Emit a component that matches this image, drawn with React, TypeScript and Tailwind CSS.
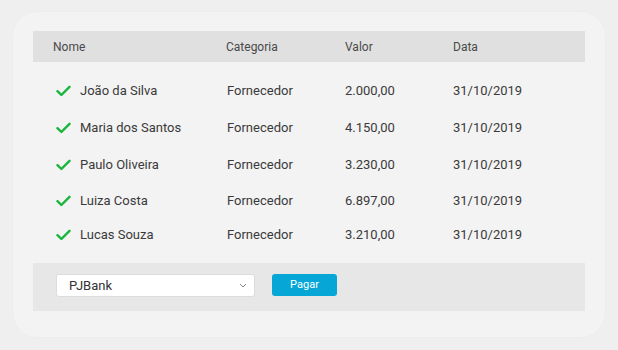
const rows = [
  { name: "João da Silva", valor: "2.000,00", data: "31/10/2019", h: "h-[36px]" },
  { name: "Maria dos Santos", valor: "4.150,00", data: "31/10/2019", h: "h-[37px]" },
  { name: "Paulo Oliveira", valor: "3.230,00", data: "31/10/2019", h: "h-[37px]" },
  { name: "Luiza Costa", valor: "6.897,00", data: "31/10/2019", h: "h-[35px]" },
  { name: "Lucas Souza", valor: "3.210,00", data: "31/10/2019", h: "h-[33px]" },
];

function Check() {
  return (
    <svg width="15" height="12" viewBox="0 0 15 12" className="shrink-0">
      <path d="M1.5 6.2 L5.4 10 L13.5 1.8" fill="none" stroke="#1ab53c" strokeWidth="2.4" strokeLinecap="round" strokeLinejoin="round" />
    </svg>
  );
}

export default function App() {
  return (
    <div className="w-[618px] h-[350px] bg-[#efefef] pt-[12px] pl-[13px]" style={{ fontFamily: "Roboto, 'Liberation Sans', sans-serif" }}>
      <div className="w-[592px] h-[325px] bg-[#f3f3f3] rounded-[24px] pt-[19px] px-[20px] shadow-[0_0_2px_rgba(0,0,0,0.04)]">
        {/* header */}
        <div className="h-[31px] bg-[#e0e0e0] flex items-center text-[12px] text-[#4a4a4a]">
          <div className="w-[193px] pl-[20px]">Nome</div>
          <div className="w-[119px]">Categoria</div>
          <div className="w-[108px]">Valor</div>
          <div>Data</div>
        </div>

        <div className="pt-[11px]">
          {rows.map((r) => (
            <div key={r.name} className={`${r.h} flex items-center text-[13px] text-[#3a3a3a]`}>
              <div className="w-[193px] pl-[23px] flex items-center gap-[9px]">
                <Check />
                <span>{r.name}</span>
              </div>
              <div className="w-[119px] pl-[1px]">Fornecedor</div>
              <div className="w-[108px]">{r.valor}</div>
              <div>{r.data}</div>
            </div>
          ))}
        </div>

        {/* footer */}
        <div className="mt-[12px] h-[48px] bg-[#e7e7e7] flex items-start pt-[11px] pl-[23px] gap-[17px]">
          <div className="w-[199px] h-[23px] bg-white border border-[#dcdcdc] rounded-[3px] flex items-center justify-between pl-[12px] pr-[7px] text-[13px] text-[#333]">
            <span>PJBank</span>
            <svg width="8" height="5" viewBox="0 0 8 5">
              <path d="M1 1 L4 4 L7 1" fill="none" stroke="#888" strokeWidth="1" />
            </svg>
          </div>
          <button className="w-[65px] h-[22px] bg-[#06a7d6] rounded-[3px] text-white text-[11px] flex items-center justify-center">
            Pagar
          </button>
        </div>
      </div>
    </div>
  );
}
